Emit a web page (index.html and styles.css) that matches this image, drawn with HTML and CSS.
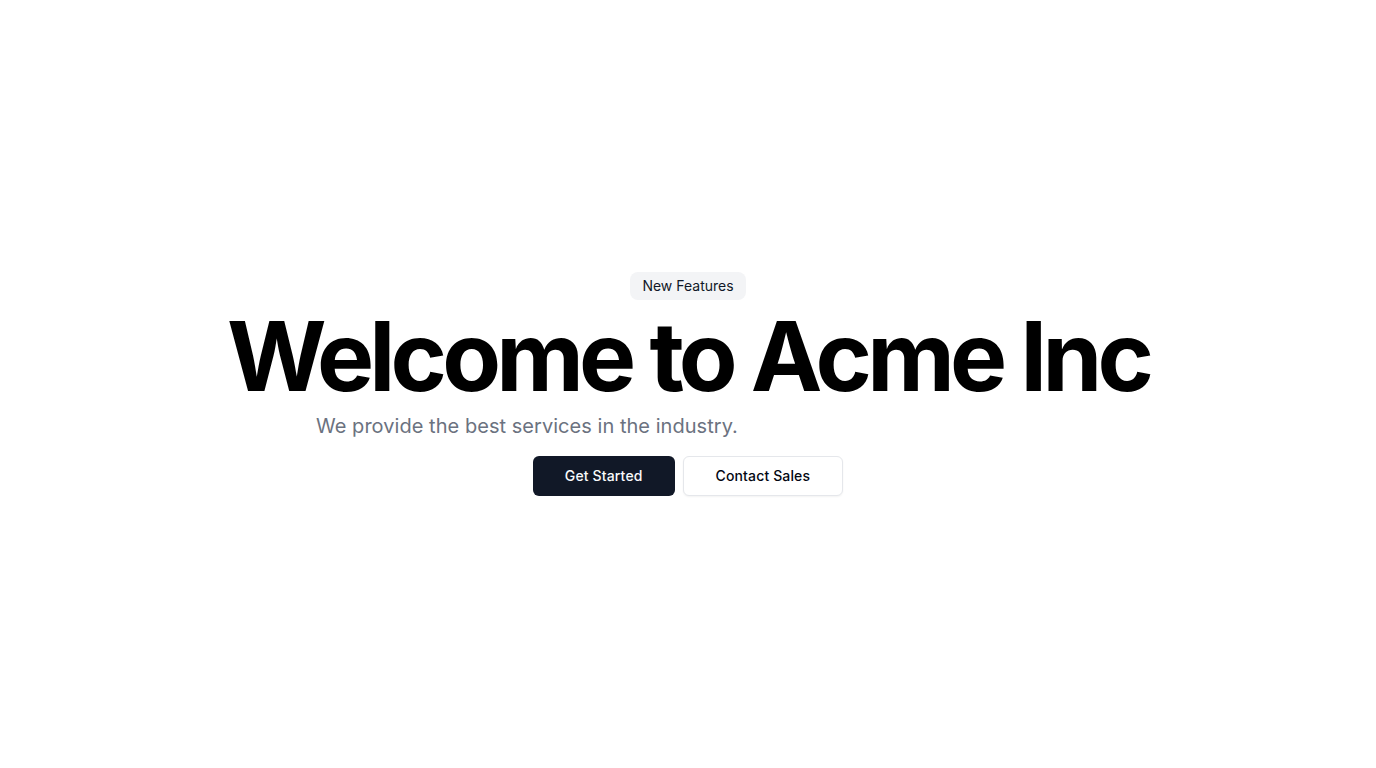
FILE: index.html
```html
<!DOCTYPE html>
<html lang="en">
<head>
<meta charset="utf-8">
<title>Acme Inc</title>
<link rel="stylesheet" href="styles.css">
</head>
<body>
<main class="hero">
  <div class="intro">
    <span class="badge">New Features</span>
    <h1 class="title">Welcome to Acme Inc</h1>
    <p class="subtitle">We provide the best services in the industry.</p>
  </div>
  <div class="actions">
    <a class="btn btn-primary" href="#">Get Started</a>
    <a class="btn btn-outline" href="#">Contact Sales</a>
  </div>
</main>
</body>
</html>
```
FILE: styles.css
```css
* { box-sizing: border-box; }
html, body { margin: 0; padding: 0; }
body {
  font-family: Inter, "Noto Sans", sans-serif;
  background: #ffffff;
  color: #030712;
}
.hero {
  min-height: 768px;
  display: flex;
  flex-direction: column;
  align-items: center;
  justify-content: center;
  gap: 16px;
}
.intro {
  display: flex;
  flex-direction: column;
  align-items: center;
  gap: 8px;
}
.badge {
  display: inline-block;
  background: #f3f4f6;
  border-radius: 8px;
  padding: 4px 12px;
  font-size: 14px;
  line-height: 20px;
  color: #111827;
}
.title {
  margin: 0;
  font-size: 96px;
  line-height: 1;
  font-weight: 700;
  letter-spacing: -0.05em;
  color: #000;
  text-align: center;
}
.subtitle {
  margin: 0;
  width: 744px;
  font-size: 20px;
  line-height: 28px;
  color: #6b7280;
  text-align: left;
  letter-spacing: 0.002em;
}
.actions {
  display: flex;
  gap: 8px;
}
.btn {
  display: inline-flex;
  align-items: center;
  justify-content: center;
  height: 40px;
  padding: 0 32px 1px;
  border-radius: 6px;
  font-size: 14px;
  font-weight: 500;
  letter-spacing: 0.01em;
  text-decoration: none;
}
.btn-primary {
  background: #111827;
  color: #f9fafb;
}
.btn-outline {
  background: #fff;
  color: #030712;
  border: 1px solid #e5e7eb;
  box-shadow: 0 1px 2px rgba(0,0,0,0.05);
}
```
